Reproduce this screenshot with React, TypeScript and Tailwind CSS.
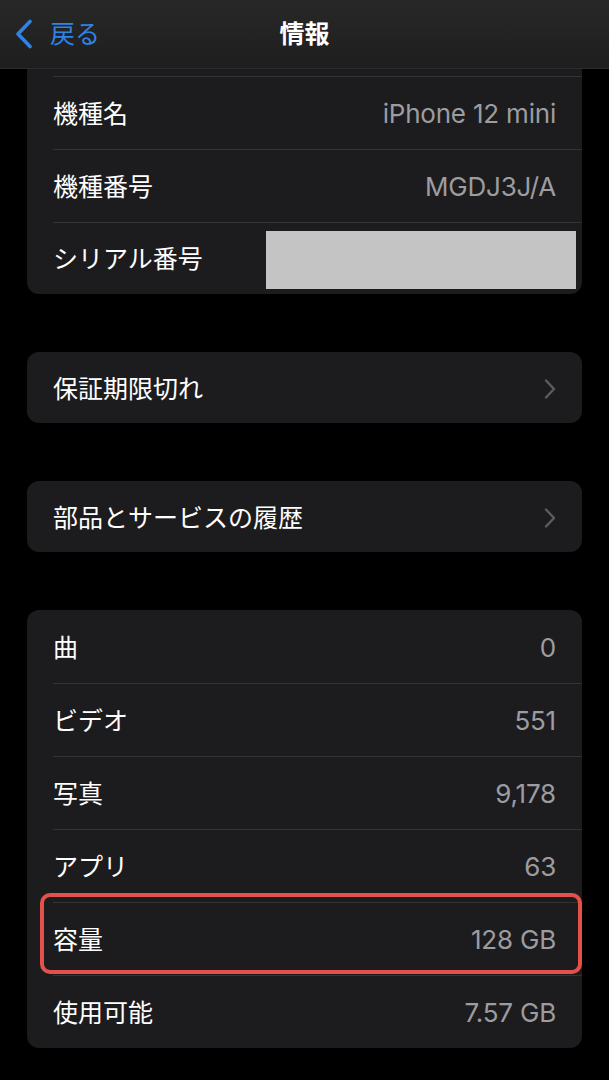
import type { ReactNode } from "react";

const font = { fontFamily: '"Inter", "Noto Sans CJK JP", sans-serif' };

function Chevron() {
  return (
    <svg width="12" height="20" viewBox="0 0 12 20" className="shrink-0">
      <path d="M2 1.5 L10 10 L2 18.5" fill="none" stroke="#5b5b60" strokeWidth="2.4" strokeLinecap="round" strokeLinejoin="round" />
    </svg>
  );
}

interface RowProps {
  label: string;
  value?: ReactNode;
  first?: boolean;
  chevron?: boolean;
}

function Row({ label, value, first, chevron }: RowProps) {
  return (
    <div
      className={`relative flex items-center justify-between pl-[26px] pr-[26px] pt-[3px] ${
        chevron ? "h-[71px]" : "h-[73px]"
      }`}
    >
      {!first ? <div className="absolute left-[26px] right-0 top-0 h-px bg-[#333336]" /> : null}
      <span className="text-[25px] leading-none text-white">{label}</span>
      {chevron ? (
        <Chevron />
      ) : (
        <span className="text-[26px] leading-none tracking-[-0.2px] text-[#9c9ca1]">{value}</span>
      )}
    </div>
  );
}

const stats: [string, string][] = [
  ["曲", "0"],
  ["ビデオ", "551"],
  ["写真", "9,178"],
  ["アプリ", "63"],
  ["容量", "128 GB"],
  ["使用可能", "7.57 GB"],
];

export default function App() {
  return (
    <div className="h-[1080px] w-[609px] overflow-hidden bg-black" style={font}>
      {/* ナビゲーションバー */}
      <header className="relative flex h-[69px] items-center justify-center border-b border-[#2c2c2e] bg-gradient-to-b from-[#282828] to-[#1e1e1e]">
        <div className="absolute left-[14px] top-0 flex h-full items-center gap-[16px]">
          <svg width="20" height="30" viewBox="0 0 20 30">
            <path d="M16 2.5 L4 15 L16 27.5" fill="none" stroke="#2f83e4" strokeWidth="3.6" strokeLinecap="round" strokeLinejoin="round" />
          </svg>
          <span className="text-[25px] leading-none text-[#2f83e4]">戻る</span>
        </div>
        <h1 className="text-[25px] font-bold leading-none text-white">情報</h1>
      </header>

      <div className="px-[27px]">
        {/* 端末情報（上部はスクロールで隠れている） */}
        <section className="rounded-b-[12px] bg-[#1c1c1e]">
          <div className="h-[7px]" />
          <Row label="機種名" value="iPhone 12 mini" />
          <Row label="機種番号" value="MGDJ3J/A" />
          <div className="relative flex h-[72px] items-center justify-between pl-[26px] pr-[6px]">
            <div className="absolute left-[26px] right-0 top-0 h-px bg-[#333336]" />
            <span className="pt-[3px] text-[25px] leading-none text-white">シリアル番号</span>
            <div className="mt-[3px] h-[58px] w-[310px] bg-[#c4c4c4]" />
          </div>
        </section>

        <section className="mt-[58px] rounded-[12px] bg-[#1c1c1e]">
          <Row label="保証期限切れ" first chevron />
        </section>

        <section className="mt-[58px] rounded-[12px] bg-[#1c1c1e]">
          <Row label="部品とサービスの履歴" first chevron />
        </section>

        <section className="relative mt-[58px] rounded-[12px] bg-[#1c1c1e]">
          {stats.map(([label, value], i) => (
            <Row key={label} label={label} value={value} first={i === 0} />
          ))}
          {/* 容量の強調枠 */}
          <div className="pointer-events-none absolute left-[13px] right-0 top-[283px] h-[81px] rounded-[10px] border-[4px] border-[#e4514a]" />
        </section>
      </div>
    </div>
  );
}
